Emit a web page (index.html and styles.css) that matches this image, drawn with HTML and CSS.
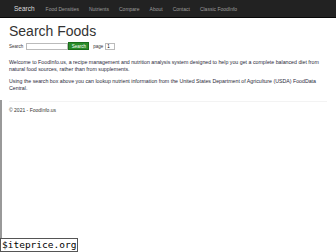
FILE: index.html
```html
<!DOCTYPE html>
<html lang="en">
<head>
    <meta charset="UTF-8">
    <title>Search Foods - FoodInfo.us</title>
    <link rel="stylesheet" href="styles.css">
</head>
<body>
    <div class="navbar">
        <a class="brand" href="#">Search</a>
        <a href="#">Food Densities</a>
        <a href="#">Nutrients</a>
        <a href="#">Compare</a>
        <a href="#">About</a>
        <a href="#">Contact</a>
        <a href="#">Classic FoodInfo</a>
    </div>
    <div class="container">
        <h2>Search Foods</h2>
        <form class="search-row">
            <label>Search</label>
            <input type="text" class="query">
            <button type="button">Search</button>
            <label class="page-label">page</label>
            <input type="text" class="page" value="1">
        </form>
        <p>Welcome to FoodInfo.us, a recipe management and nutrition analysis system designed to help you get a complete balanced diet from natural food sources, rather than from supplements.</p>
        <p>Using the search box above you can lookup nutrient information from the United States Department of Agriculture (USDA) FoodData Central.</p>
        <hr>
        <footer>&copy; 2021 - FoodInfo.us</footer>
    </div>
    <div class="side-line"></div>
    <div class="watermark">$iteprice.org</div>
</body>
</html>
```

FILE: styles.css
```css
body {
    margin: 0;
    font-family: 'Liberation Sans', Arial, sans-serif;
    color: #333;
    background: #fff;
    position: relative;
    height: 252px;
    overflow: hidden;
}
.navbar {
    background-color: #222;
    height: 17px;
    display: flex;
    align-items: center;
    padding-left: 14px;
    gap: 10px;
    border-bottom: 1px solid #080808;
}
.navbar a {
    color: #9d9d9d;
    text-decoration: none;
    font-size: 5px;
}
.navbar a.brand {
    color: #ddd;
    font-size: 6.5px;
    margin-right: 1px;
}
.container {
    padding: 0 9px;
}
h2 {
    font-weight: 400;
    font-size: 14px;
    margin: 5px 0 3px;
    line-height: 16px;
}
.search-row {
    display: flex;
    align-items: center;
    font-size: 4.5px;
    height: 8px;
}
.search-row label {
    margin-right: 3px;
}
.search-row .query {
    width: 42px;
    height: 7px;
    box-sizing: border-box;
    border: 1px solid #bbb;
    padding: 0;
    margin: 0;
}
.search-row button {
    height: 8px;
    width: 21px;
    padding: 0;
    border: 1px solid #1b6d1b;
    background: #2a8c2a;
    color: #fff;
    font-size: 4.5px;
    font-family: inherit;
    margin-right: 4px;
}
.search-row .page-label {
    margin-right: 2px;
}
.search-row .page {
    width: 10px;
    height: 7px;
    box-sizing: border-box;
    border: 1px solid #bbb;
    padding: 0 1px;
    margin: 0;
    font-size: 4.5px;
}
p {
    font-size: 5.25px;
    line-height: 7px;
    margin: 9px 0 0;
    color: #2a2a3a;
}
p + p {
    margin-top: 5px;
}
hr {
    border: 0;
    border-top: 1px solid #f3f3f3;
    margin: 9px 0 5px;
}
footer {
    font-size: 5px;
}
.side-line {
    position: absolute;
    left: 0;
    top: 100px;
    bottom: 0;
    width: 2px;
    background: #999;
}
.watermark {
    position: absolute;
    left: 0;
    bottom: 0;
    border: 1px solid #555;
    background: #fff;
    color: #000;
    font-family: 'DejaVu Sans Mono', monospace;
    font-size: 9.5px;
    line-height: 12px;
    padding: 0 1px;
}
```
